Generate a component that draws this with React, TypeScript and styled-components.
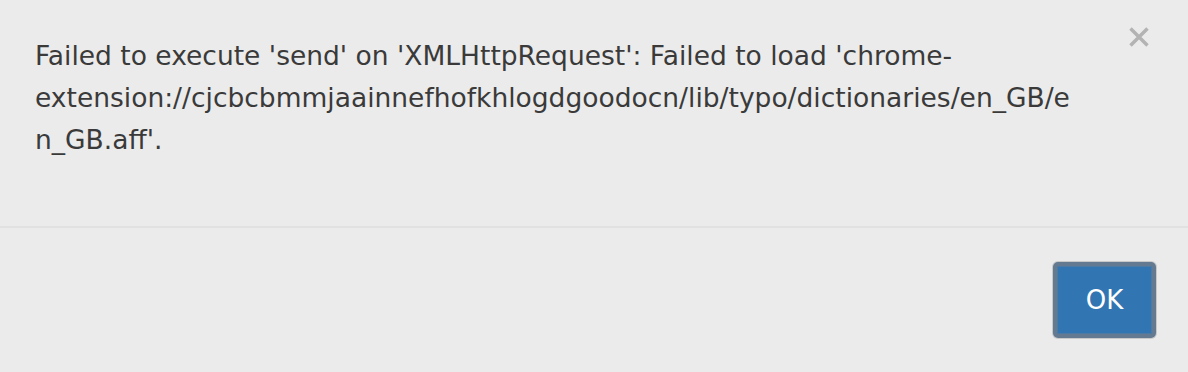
import React from "react";
import styled, { createGlobalStyle } from "styled-components";

const Global = createGlobalStyle`
  html, body { margin: 0; padding: 0; background: #ebebeb; }
  body { font-family: "DejaVu Sans", "Liberation Sans", sans-serif; }
  #root { width: 1188px; height: 372px; }
`;

const Dialog = styled.div`
  width: 1188px;
  height: 372px;
  display: flex;
  flex-direction: column;
  background: #ebebeb;
`;

const Body = styled.div`
  position: relative;
  height: 226px;
  box-sizing: border-box;
  padding: 35px 60px 0 35px;
`;

const Message = styled.p`
  margin: 0;
  color: #3a3a3a;
  font-size: 26.5px;
  line-height: 42px;
`;

const Line = styled.span`
  display: block;
  white-space: nowrap;
`;

const Close = styled.button`
  position: absolute;
  top: 24px;
  right: 36px;
  width: 26px;
  height: 26px;
  padding: 0;
  border: 0;
  background: transparent;
  display: flex;
  align-items: center;
  justify-content: center;
  cursor: pointer;
`;

const Divider = styled.div`
  height: 2px;
  background: #e1e1e1;
`;

const Footer = styled.div`
  flex: 1;
  display: flex;
  justify-content: flex-end;
  align-items: flex-start;
  padding: 34px 32px 0 0;
`;

const OkButton = styled.button`
  width: 103px;
  height: 76px;
  box-sizing: border-box;
  border: 4px solid #647a90;
  border-radius: 5px;
  background: #3176b2;
  box-shadow: inset 0 0 0 1px #4d7aa3, 0 0 0 1px #c9c9c9;
  color: #ffffff;
  font-family: "DejaVu Sans", "Liberation Sans", sans-serif;
  font-size: 26px;
  padding: 0;
  cursor: pointer;
`;

export default function App() {
  return (
    <>
      <Global />
      <Dialog>
        <Body>
          <Message>
            <Line>Failed to execute 'send' on 'XMLHttpRequest': Failed to load 'chrome-</Line>
            <Line>extension://cjcbcbmmjaainnefhofkhlogdgoodocn/lib/typo/dictionaries/en_GB/e</Line>
            <Line>n_GB.aff'.</Line>
          </Message>
          <Close aria-label="Close">
            <svg width="22" height="22" viewBox="0 0 22 22">
              <path d="M2.5 2.5 L19.5 19.5 M19.5 2.5 L2.5 19.5" stroke="#b3b3b3" strokeWidth="3.4" strokeLinecap="butt" />
            </svg>
          </Close>
        </Body>
        <Divider />
        <Footer>
          <OkButton>OK</OkButton>
        </Footer>
      </Dialog>
    </>
  );
}
